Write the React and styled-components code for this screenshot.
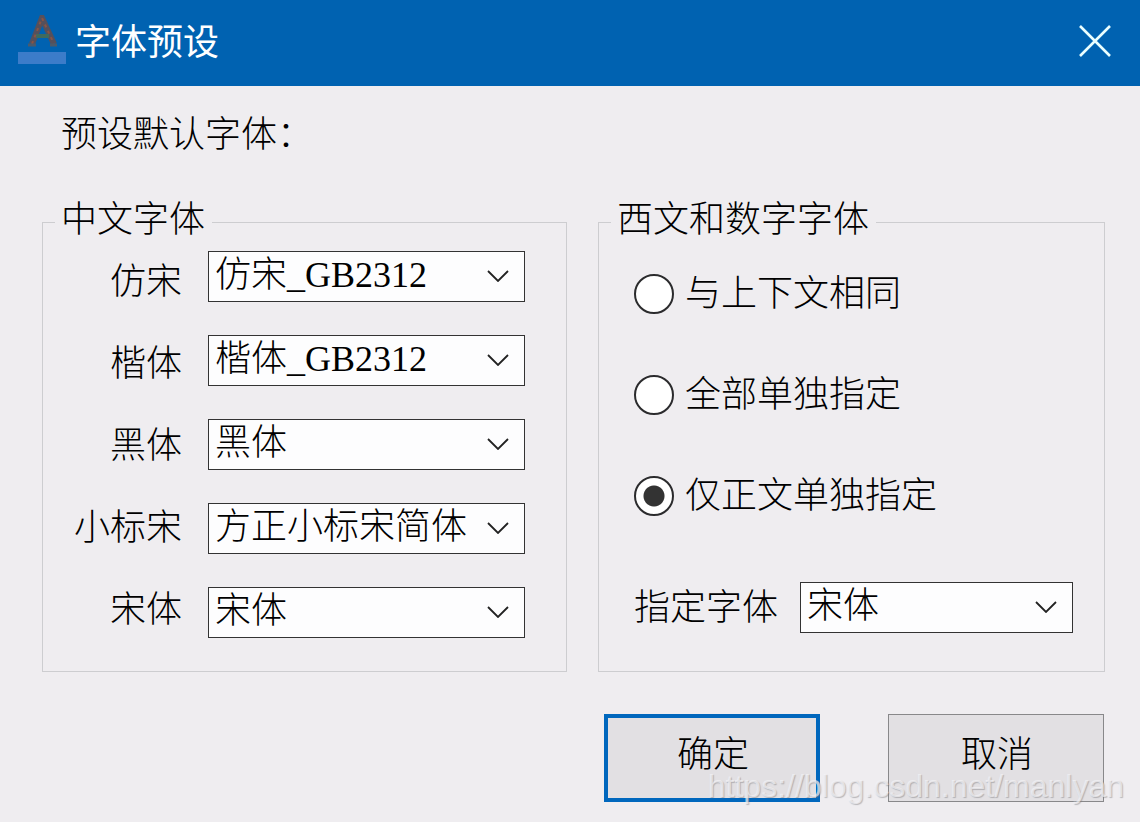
import { useState } from 'react'
import styled, { createGlobalStyle } from 'styled-components'

const GlobalStyle = createGlobalStyle`
  * { box-sizing: border-box; }
  body {
    margin: 0;
    background: #efedf0;
    color: #000;
    font-family: 'Liberation Serif', 'Noto Sans CJK SC', sans-serif;
    font-size: 36px;
    font-weight: 300;
    line-height: 50px;
  }
`

const chineseFonts = [
  { id: 'fangsong', label: '仿宋', value: '仿宋_GB2312' },
  { id: 'kaiti', label: '楷体', value: '楷体_GB2312' },
  { id: 'heiti', label: '黑体', value: '黑体' },
  { id: 'xiaobiaosong', label: '小标宋', value: '方正小标宋简体' },
  { id: 'songti', label: '宋体', value: '宋体' },
]
const fontOptions = chineseFonts.map((f) => f.value)
const westernModes = ['与上下文相同', '全部单独指定', '仅正文单独指定']

const FontSelect = ({ id, value, onChange }) => (
  <SelectWrap>
    <Select id={id} value={value} onChange={(e) => onChange(e.target.value)}>
      {fontOptions.map((f) => <option key={f}>{f}</option>)}
    </Select>
    <Chevron viewBox="0 0 22 12" aria-hidden="true">
      <path d="M1 1 L11 11 L21 1" fill="none" stroke="#222" strokeWidth="1.8" />
    </Chevron>
  </SelectWrap>
)

const App = () => {
  const [fonts, setFonts] = useState(
    Object.fromEntries(chineseFonts.map((f) => [f.id, f.value]))
  )
  const [mode, setMode] = useState(westernModes[2])
  const [western, setWestern] = useState('宋体')

  return (
    <Dialog>
      <GlobalStyle />
      <TitleBar>
        <Logo viewBox="0 0 48 50" aria-hidden="true">
          <rect x="0" y="37" width="48" height="12" fill="#3c7cc9" />
          <path d="M14 29 L24 3 L36 29" fill="none" stroke="#55505c" strokeWidth="6" />
          <path d="M18 21 H31" stroke="#3f6a5e" strokeWidth="4" />
          <path d="M14 29 L24 3 L36 29" fill="none" stroke="#8a5444" strokeWidth="2" strokeDasharray="3 4" />
          <path d="M10 30 H18 M32 30 H39" stroke="#4b5a6c" strokeWidth="3" />
        </Logo>
        <Title>字体预设</Title>
        <CloseButton aria-label="关闭">
          <svg viewBox="0 0 32 32" width="32" height="32">
            <path d="M1 1 L31 31 M31 1 L1 31" stroke="#eaffff" strokeWidth="2.6" />
          </svg>
        </CloseButton>
      </TitleBar>

      <Content>
        <Intro>预设默认字体：</Intro>
        <Groups>
          <Group>
            <Legend>中文字体</Legend>
            <FontGrid>
              <LabelColumn>
                {chineseFonts.map((f) => (
                  <Label key={f.id} htmlFor={f.id}>{f.label}</Label>
                ))}
              </LabelColumn>
              <SelectColumn>
                {chineseFonts.map((f) => (
                  <FontSelect
                    key={f.id}
                    id={f.id}
                    value={fonts[f.id]}
                    onChange={(v) => setFonts({ ...fonts, [f.id]: v })}
                  />
                ))}
              </SelectColumn>
            </FontGrid>
          </Group>

          <Group>
            <Legend>西文和数字字体</Legend>
            <WesternBox>
              <RadioList>
                {westernModes.map((m) => (
                  <RadioLabel key={m}>
                    <Radio type="radio" name="mode" checked={mode === m} onChange={() => setMode(m)} />
                    {m}
                  </RadioLabel>
                ))}
              </RadioList>
              <WesternRow>
                <Label htmlFor="western">指定字体</Label>
                <FontSelect id="western" value={western} onChange={setWestern} />
              </WesternRow>
            </WesternBox>
          </Group>
        </Groups>

        <Actions>
          <Button $primary>确定</Button>
          <Button>取消</Button>
        </Actions>
      </Content>
      <Watermark>https://blog.csdn.net/manlyan</Watermark>
    </Dialog>
  )
}

const Dialog = styled.main`
  position: relative;
  min-height: 100vh;
  background: #efedf0;
`
const TitleBar = styled.header`
  display: flex;
  align-items: center;
  height: 86px;
  padding: 0 29px 4px 18px;
  background: #0062b1;
`
const Logo = styled.svg`
  width: 48px;
  height: 50px;
  margin: 0 9px 2px 0;
`
const Title = styled.h1`
  flex: 1;
  margin: 0;
  padding-top: 3px;
  color: #fff;
  font-size: 36px;
  font-weight: 400;
`
const CloseButton = styled.button`
  display: flex;
  padding: 0;
  border: none;
  background: none;
  cursor: pointer;
`
const Content = styled.div`
  padding: 24px 35px 20px 42px;
`
const Intro = styled.p`
  margin: 0 0 42px 19px;
`
const Groups = styled.div`
  display: grid;
  grid-template-columns: 525fr 507fr;
  gap: 31px;
`
const Group = styled.fieldset`
  min-width: 0;
  margin: 0;
  padding: 0;
  border: 1px solid #cdcdd0;
`
const Legend = styled.legend`
  margin-left: 12px;
  padding: 0 7px 4px 6px;
  line-height: 36px;
`
const FontGrid = styled.div`
  display: grid;
  grid-template-columns: 139px 1fr;
  column-gap: 26px;
  padding: 9px 41px 33px 0;
`
const LabelColumn = styled.div`
  display: flex;
  flex-direction: column;
  gap: 32px;
  padding-top: 6px;
`
const SelectColumn = styled.div`
  display: flex;
  flex-direction: column;
  gap: 33px;
`
const Label = styled.label`
  text-align: right;
  white-space: nowrap;
`
const SelectWrap = styled.div`
  position: relative;
  flex: 1;
  min-width: 0;
`
const Select = styled.select`
  display: block;
  appearance: none;
  width: 100%;
  height: 51px;
  padding: 0 40px 2px 6px;
  border: 1px solid #333;
  border-radius: 0;
  background: #fdfdfe;
  color: #000;
  font: inherit;
  line-height: 45px;
`
const Chevron = styled.svg`
  position: absolute;
  right: 16px;
  top: 19px;
  width: 22px;
  height: 12px;
  pointer-events: none;
`
const WesternBox = styled.div`
  padding: 27px 31px 0 35px;
`
const RadioList = styled.div`
  display: grid;
  gap: 51px;
`
const RadioLabel = styled.label`
  display: flex;
  align-items: center;
  gap: 11px;
`
const Radio = styled.input`
  appearance: none;
  flex: none;
  width: 40px;
  height: 40px;
  margin: 0;
  border: 2px solid #2b2b2d;
  border-radius: 50%;
  background: #fff;
  &:checked {
    background: radial-gradient(circle, #333 10px, #fff 11px);
  }
`
const WesternRow = styled.div`
  display: flex;
  align-items: center;
  gap: 22px;
  margin-top: 61px;
`
const Actions = styled.div`
  display: flex;
  justify-content: flex-end;
  gap: 68px;
  margin-top: 42px;
  padding-right: 1px;
`
const Button = styled.button`
  width: 216px;
  height: 88px;
  padding: 0 0 6px 2px;
  border: ${(p) => (p.$primary ? '4px solid #0067bd' : '1px solid #88888a')};
  background: #e2e0e3;
  color: #000;
  font: inherit;
`
const Watermark = styled.span`
  position: absolute;
  right: 16px;
  bottom: 16px;
  color: rgba(245, 244, 247, 0.7);
  font-family: 'Liberation Sans', Arial, sans-serif;
  font-size: 32px;
  font-weight: 400;
  line-height: 40px;
  text-shadow: 1px 1px 1px rgba(120, 120, 125, 0.45);
  pointer-events: none;
`

export default App
